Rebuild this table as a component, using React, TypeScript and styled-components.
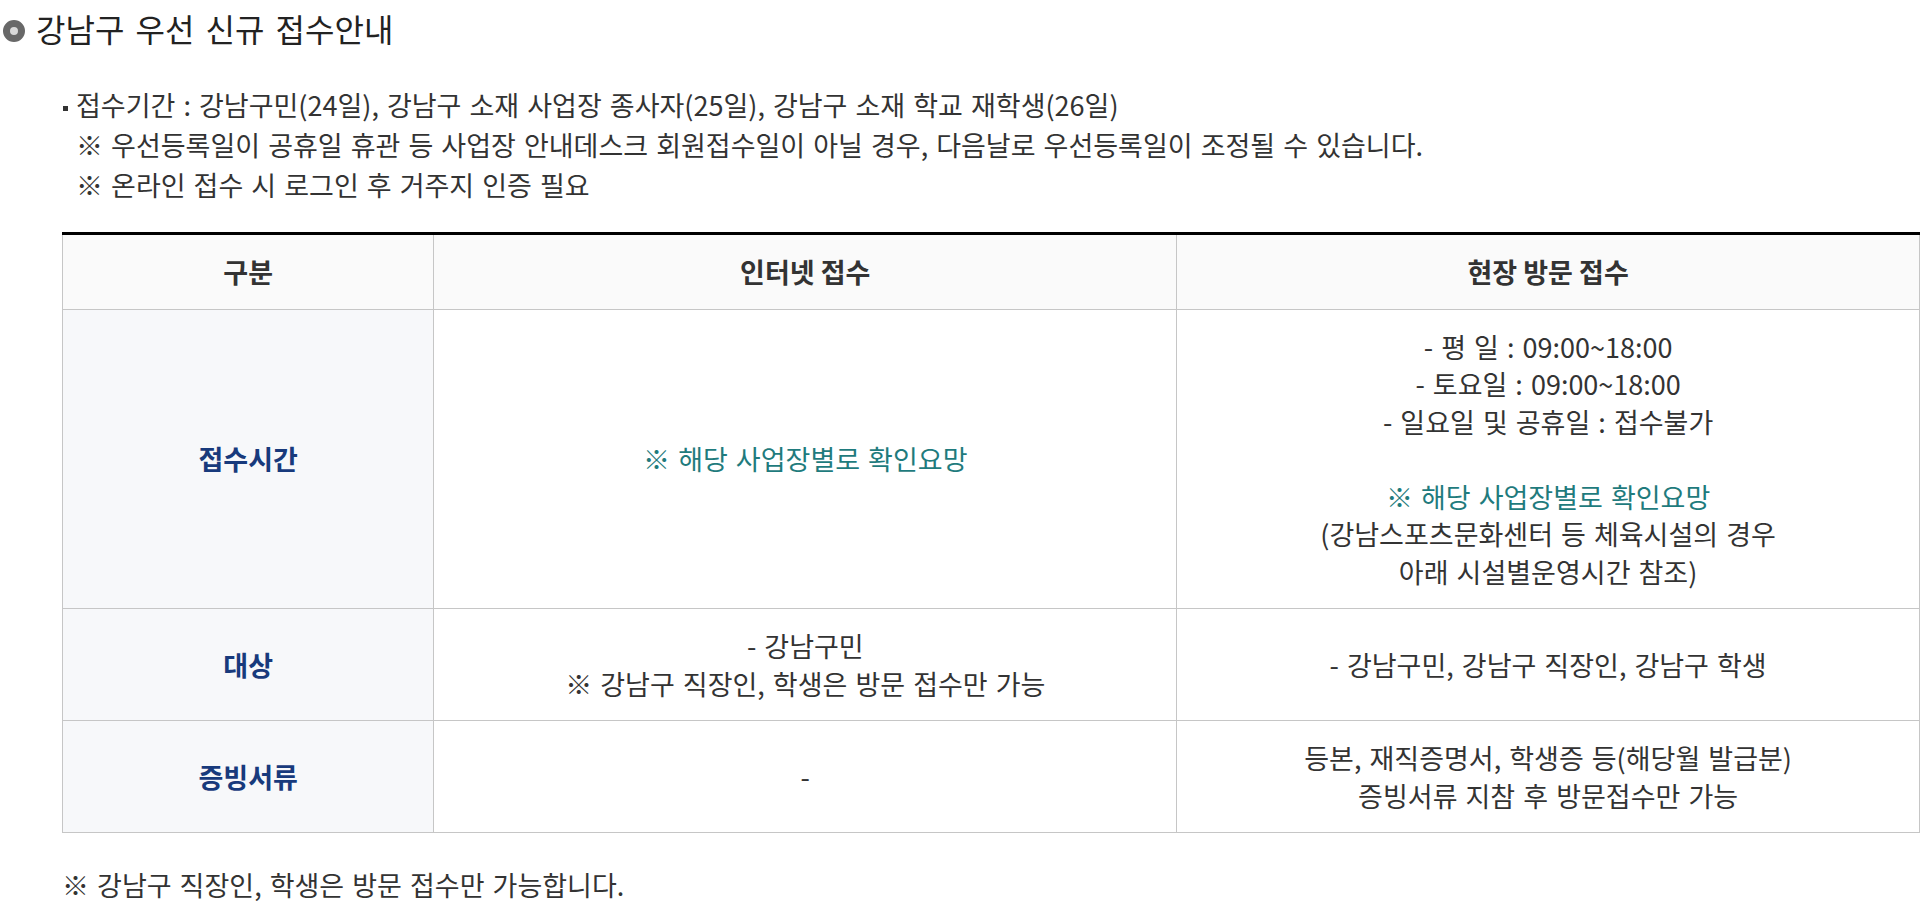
import styled, { createGlobalStyle } from "styled-components";

const GlobalStyle = createGlobalStyle`
  body {
    margin: 0;
    background: #ffffff;
    font-family: "Noto Sans CJK KR", "Noto Sans", sans-serif;
    color: #333333;
  }
`;

const Page = styled.div`
  padding: 0 12px 40px 3px;
`;

const TitleRow = styled.h2`
  display: flex;
  align-items: center;
  gap: 11px;
  margin: 0;
  height: 56px;
  font-size: 32px;
  font-weight: 400;
  color: #222;
  word-spacing: 4px;
`;

const RingIcon = styled.span`
  width: 22px;
  height: 22px;
  margin-top: 6px;
  border-radius: 50%;
  box-sizing: border-box;
  border: 7px solid #686868;
  background: #d9d9d9;
  flex-shrink: 0;
`;

const Notice = styled.ul`
  list-style: none;
  margin: 29px 0 0 56px;
  padding: 0;
  font-size: 27px;
  line-height: 40px;
  color: #333;
`;

const NoticeLine = styled.li<{ $bullet?: boolean }>`
  position: relative;
  padding-left: 17px;
  word-spacing: 2px;

  &::before {
    content: "";
    display: ${(p) => (p.$bullet ? "block" : "none")};
    position: absolute;
    left: 4px;
    top: 21px;
    width: 5px;
    height: 5px;
    background: #333;
  }
`;

const Table = styled.table`
  width: 1858px;
  margin: 27px 0 0 59px;
  border-collapse: collapse;
  table-layout: fixed;
  font-size: 27px;
  line-height: 37.5px;
  border-top: 3px solid #000;
`;

const HeadCell = styled.th`
  background: #fafafa;
  border: 1px solid #c6c6c6;
  border-top: none;
  padding: 18px 10px;
  font-weight: 700;
  color: #333;
  text-align: center;
`;

const LabelCell = styled.th`
  background: #f7f8fa;
  border: 1px solid #c6c6c6;
  padding: 18px 10px;
  font-weight: 700;
  color: #183a7c;
  text-align: center;
  vertical-align: middle;
`;

const Cell = styled.td`
  border: 1px solid #c6c6c6;
  padding: 18px 10px;
  color: #333;
  text-align: center;
  vertical-align: middle;
  word-spacing: 2px;
`;

const Line = styled.div<{ $accent?: boolean }>`
  color: ${(p) => (p.$accent ? "#1f7b7d" : "inherit")};
  min-height: 37.5px;
`;

const Footnote = styled.p`
  margin: 32px 0 0 59px;
  font-size: 27px;
  line-height: 40px;
  color: #333;
  word-spacing: 2px;
`;

export default function App() {
  return (
    <Page>
      <GlobalStyle />
      <TitleRow>
        <RingIcon />
        강남구 우선 신규 접수안내
      </TitleRow>

      <Notice>
        <NoticeLine $bullet>
          접수기간 : 강남구민(24일), 강남구 소재 사업장 종사자(25일), 강남구 소재 학교 재학생(26일)
        </NoticeLine>
        <NoticeLine>
          ※ 우선등록일이 공휴일 휴관 등 사업장 안내데스크 회원접수일이 아닐 경우, 다음날로 우선등록일이 조정될 수 있습니다.
        </NoticeLine>
        <NoticeLine>※ 온라인 접수 시 로그인 후 거주지 인증 필요</NoticeLine>
      </Notice>

      <Table>
        <colgroup>
          <col style={{ width: "20%" }} />
          <col style={{ width: "40%" }} />
          <col style={{ width: "40%" }} />
        </colgroup>
        <thead>
          <tr>
            <HeadCell>구분</HeadCell>
            <HeadCell>인터넷 접수</HeadCell>
            <HeadCell>현장 방문 접수</HeadCell>
          </tr>
        </thead>
        <tbody>
          <tr>
            <LabelCell>접수시간</LabelCell>
            <Cell>
              <Line $accent>※ 해당 사업장별로 확인요망</Line>
            </Cell>
            <Cell>
              <Line>- 평 일 : 09:00~18:00</Line>
              <Line>- 토요일 : 09:00~18:00</Line>
              <Line>- 일요일 및 공휴일 : 접수불가</Line>
              <Line />
              <Line $accent>※ 해당 사업장별로 확인요망</Line>
              <Line>(강남스포츠문화센터 등 체육시설의 경우</Line>
              <Line>아래 시설별운영시간 참조)</Line>
            </Cell>
          </tr>
          <tr>
            <LabelCell>대상</LabelCell>
            <Cell>
              <Line>- 강남구민</Line>
              <Line>※ 강남구 직장인, 학생은 방문 접수만 가능</Line>
            </Cell>
            <Cell>
              <Line>- 강남구민, 강남구 직장인, 강남구 학생</Line>
            </Cell>
          </tr>
          <tr>
            <LabelCell>증빙서류</LabelCell>
            <Cell>
              <Line>-</Line>
            </Cell>
            <Cell>
              <Line>등본, 재직증명서, 학생증 등(해당월 발급분)</Line>
              <Line>증빙서류 지참 후 방문접수만 가능</Line>
            </Cell>
          </tr>
        </tbody>
      </Table>

      <Footnote>※ 강남구 직장인, 학생은 방문 접수만 가능합니다.</Footnote>
    </Page>
  );
}
